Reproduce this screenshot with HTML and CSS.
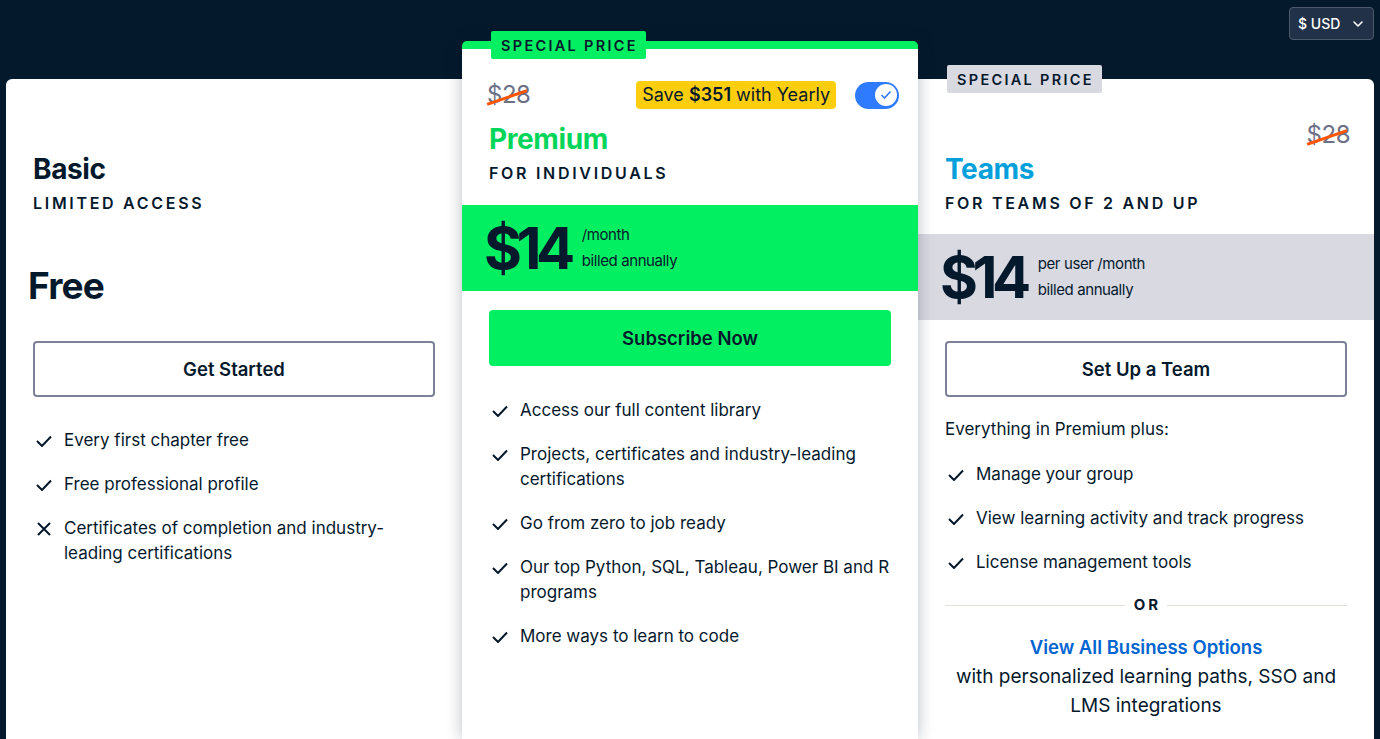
FILE: index.html
```html
<!DOCTYPE html>
<html lang="en">
<head>
    <meta charset="UTF-8">
    <meta name="viewport" content="width=device-width, initial-scale=1.0">
    <title>Plans and Pricing</title>
    <link rel="stylesheet" href="styles.css">
</head>
<body>
    <header class="topbar">
        <button class="currency" type="button">
            $ USD
            <svg class="chevron" width="10" height="6" viewBox="0 0 10 6"><path d="M1 1l4 4 4-4" fill="none" stroke="currentColor" stroke-width="1.6" stroke-linecap="round" stroke-linejoin="round"/></svg>
        </button>
    </header>

    <main class="plans">
        <!-- Basic -->
        <section class="plan plan-basic">
            <div class="plan-head">
                <div class="deal-row"></div>
                <h2 class="plan-name">Basic</h2>
                <p class="plan-sub">Limited Access</p>
            </div>
            <div class="price-band">
                <span class="price-free">Free</span>
            </div>
            <div class="plan-body">
                <a class="btn btn-outline" href="#">Get Started</a>
                <ul class="features">
                    <li>
                        <span class="icon"><svg width="16" height="12" viewBox="0 0 16 12"><path d="M1 6l5 5 9-9.5" fill="none" stroke="currentColor" stroke-width="2"/></svg></span>
                        Every first chapter free
                    </li>
                    <li>
                        <span class="icon"><svg width="16" height="12" viewBox="0 0 16 12"><path d="M1 6l5 5 9-9.5" fill="none" stroke="currentColor" stroke-width="2"/></svg></span>
                        Free professional profile
                    </li>
                    <li>
                        <span class="icon"><svg width="16" height="14" viewBox="0 0 16 14"><path d="M2 1l12 12M14 1L2 13" fill="none" stroke="currentColor" stroke-width="2"/></svg></span>
                        Certificates of completion and industry-leading certifications
                    </li>
                </ul>
            </div>
        </section>

        <!-- Premium -->
        <section class="plan plan-premium">
            <span class="tag tag-green">Special Price</span>
            <div class="plan-head">
                <div class="deal-row">
                    <span class="old-price">$28</span>
                    <div class="deal-extra">
                        <span class="save-badge">Save <b>$351</b> with Yearly</span>
                        <span class="toggle">
                            <span class="knob"><svg width="12" height="10" viewBox="0 0 12 10"><path d="M1.5 5l3 3 6-6.5" fill="none" stroke="currentColor" stroke-width="1.6"/></svg></span>
                        </span>
                    </div>
                </div>
                <h2 class="plan-name">Premium</h2>
                <p class="plan-sub">For Individuals</p>
            </div>
            <div class="price-band">
                <span class="price-amount">$14</span>
                <span class="price-note">/month<br>billed annually</span>
            </div>
            <div class="plan-body">
                <a class="btn btn-green" href="#">Subscribe Now</a>
                <ul class="features">
                    <li>
                        <span class="icon"><svg width="16" height="12" viewBox="0 0 16 12"><path d="M1 6l5 5 9-9.5" fill="none" stroke="currentColor" stroke-width="2"/></svg></span>
                        Access our full content library
                    </li>
                    <li>
                        <span class="icon"><svg width="16" height="12" viewBox="0 0 16 12"><path d="M1 6l5 5 9-9.5" fill="none" stroke="currentColor" stroke-width="2"/></svg></span>
                        Projects, certificates and industry-leading certifications
                    </li>
                    <li>
                        <span class="icon"><svg width="16" height="12" viewBox="0 0 16 12"><path d="M1 6l5 5 9-9.5" fill="none" stroke="currentColor" stroke-width="2"/></svg></span>
                        Go from zero to job ready
                    </li>
                    <li>
                        <span class="icon"><svg width="16" height="12" viewBox="0 0 16 12"><path d="M1 6l5 5 9-9.5" fill="none" stroke="currentColor" stroke-width="2"/></svg></span>
                        Our top Python, SQL, Tableau, Power BI and R programs
                    </li>
                    <li>
                        <span class="icon"><svg width="16" height="12" viewBox="0 0 16 12"><path d="M1 6l5 5 9-9.5" fill="none" stroke="currentColor" stroke-width="2"/></svg></span>
                        More ways to learn to code
                    </li>
                </ul>
            </div>
        </section>

        <!-- Teams -->
        <section class="plan plan-teams">
            <span class="tag tag-grey">Special Price</span>
            <div class="plan-head">
                <div class="deal-row">
                    <span class="old-price">$28</span>
                </div>
                <h2 class="plan-name">Teams</h2>
                <p class="plan-sub">For Teams of 2 and up</p>
            </div>
            <div class="price-band">
                <span class="price-amount">$14</span>
                <span class="price-note">per user /month<br>billed annually</span>
            </div>
            <div class="plan-body">
                <a class="btn btn-outline" href="#">Set Up a Team</a>
                <p class="plan-intro">Everything in Premium plus:</p>
                <ul class="features">
                    <li>
                        <span class="icon"><svg width="16" height="12" viewBox="0 0 16 12"><path d="M1 6l5 5 9-9.5" fill="none" stroke="currentColor" stroke-width="2"/></svg></span>
                        Manage your group
                    </li>
                    <li>
                        <span class="icon"><svg width="16" height="12" viewBox="0 0 16 12"><path d="M1 6l5 5 9-9.5" fill="none" stroke="currentColor" stroke-width="2"/></svg></span>
                        View learning activity and track progress
                    </li>
                    <li>
                        <span class="icon"><svg width="16" height="12" viewBox="0 0 16 12"><path d="M1 6l5 5 9-9.5" fill="none" stroke="currentColor" stroke-width="2"/></svg></span>
                        License management tools
                    </li>
                </ul>
                <div class="or-divider"><span>OR</span></div>
                <p class="business">
                    <a href="#">View All Business Options</a>
                    with personalized learning paths, SSO and LMS integrations
                </p>
            </div>
        </section>
    </main>
</body>
</html>
```

FILE: styles.css
```css
* {
    box-sizing: border-box;
}
body {
    margin: 0;
    font-family: Inter, "Noto Sans", sans-serif;
    background-color: #05192d; /* navy page */
    color: #05192d;
    overflow: hidden;
}
a {
    text-decoration: none;
    color: inherit;
}
p, h2, ul {
    margin: 0;
}

/* top bar */
.topbar {
    height: 41px;
    padding: 7px 6px 0;
    display: flex;
    justify-content: flex-end;
}
.currency {
    height: 33px;
    width: 85px;
    display: flex;
    align-items: center;
    gap: 13px;
    padding: 0 0 0 8px;
    background-color: #213147;
    border: 1px solid #4d5a6c;
    border-radius: 4px;
    color: #ffffff;
    font-family: inherit;
    font-size: 14px;
    font-weight: 500;
}

/* cards */
.plans {
    display: grid;
    grid-template-columns: repeat(3, 1fr);
    padding: 0 6px;
    height: calc(100vh - 41px);
}
.plan {
    position: relative;
    background-color: #ffffff;
}
.plan-basic {
    margin-top: 38px;
    border-radius: 6px 0 0 0;
}
.plan-teams {
    margin-top: 38px;
    border-radius: 0 6px 0 0;
}
.plan-premium {
    z-index: 1;
    border-top: 8px solid #03ef62;
    border-radius: 5px 5px 0 0;
    box-shadow: 0 0 16px rgba(5, 25, 45, 0.28);
}

.tag {
    position: absolute;
    left: 29px;
    height: 28px;
    padding: 0 8px 0 10px;
    display: flex;
    align-items: center;
    border-radius: 2px;
    font-size: 14.5px;
    font-weight: 600;
    letter-spacing: 2.3px;
    text-transform: uppercase;
}
.tag-green {
    top: -18px;
    background-color: #03ef62;
}
.tag-grey {
    top: -14px;
    background-color: #d9d9e2;
}

.plan-head {
    padding: 42px 27px 0;
}
.plan-premium .plan-head {
    padding-top: 32px;
}
.deal-row {
    height: 28px;
    display: flex;
    align-items: center;
}
.plan-premium .deal-row {
    margin: 0 -8px 0 -2px;
}
.plan-teams .deal-row {
    justify-content: flex-end;
    margin-right: -3px;
}
.old-price {
    position: relative;
    font-size: 24px;
    line-height: 28px;
    color: #6c7087;
    letter-spacing: -0.5px;
}
.old-price::after {
    content: "";
    position: absolute;
    left: -1px;
    top: 15px;
    width: 42px;
    height: 3px;
    background-color: #ff5400;
    transform: rotate(-19deg);
}
.deal-extra {
    margin-left: auto;
    display: flex;
    align-items: center;
    gap: 19px;
}
.save-badge {
    height: 28px;
    padding: 0 6px;
    background-color: #fcce0d;
    border-radius: 4px;
    font-size: 18px;
    line-height: 28px;
}
.save-badge b {
    font-weight: 600;
}
.toggle {
    width: 44px;
    height: 27px;
    padding: 0 2px;
    display: flex;
    align-items: center;
    justify-content: flex-end;
    background-color: #2f7bff;
    border-radius: 14px;
}
.knob {
    width: 22px;
    height: 22px;
    display: flex;
    align-items: center;
    justify-content: center;
    background-color: #ffffff;
    border-radius: 50%;
    color: #2f7bff;
}

.plan-name {
    margin-top: 2px;
    font-size: 28px;
    line-height: 36px;
    font-weight: 700;
    letter-spacing: -0.4px;
}
.plan-premium .plan-name {
    margin-top: 12px;
    color: #02d65a;
}
.plan-teams .plan-name {
    color: #03a0dc;
}
.plan-sub {
    margin-top: 6px;
    font-size: 16px;
    line-height: 20px;
    font-weight: 600;
    letter-spacing: 2.7px;
    text-transform: uppercase;
}

.price-band {
    height: 86px;
    margin-top: 21px;
    padding: 0 22px;
    display: flex;
    align-items: center;
    gap: 12px;
}
.plan-premium .price-band {
    margin-top: 22px;
    background-color: #03ef62;
}
.plan-teams .price-band {
    background-color: #d9d9e2;
}
.price-free {
    margin-top: 16px;
    font-size: 37px;
    font-weight: 700;
    letter-spacing: -0.8px;
}
.price-amount {
    font-size: 58px;
    line-height: 1;
    font-weight: 700;
    letter-spacing: -5.5px;
}
.price-note {
    font-size: 15px;
    line-height: 26px;
    letter-spacing: -0.4px;
}

.plan-body {
    padding: 21px 27px 0;
}
.plan-premium .plan-body {
    padding-top: 19px;
}
.btn {
    height: 56px;
    display: flex;
    align-items: center;
    justify-content: center;
    border-radius: 4px;
    font-size: 18.5px;
    font-weight: 600;
}
.btn-outline {
    border: 2px solid #7d8099;
}
.btn-green {
    background-color: #03ef62;
}

.features {
    margin-top: 31px;
    padding: 0;
    list-style: none;
    display: flex;
    flex-direction: column;
    gap: 19px;
}
.plan-premium .features {
    margin-top: 32px;
}
.features li {
    display: flex;
    font-size: 17px;
    line-height: 25px;
}
.icon {
    flex: none;
    width: 31px;
    height: 25px;
    padding-left: 3px;
    display: flex;
    align-items: center;
}
.plan-intro {
    margin-top: 20px;
    font-size: 17px;
    line-height: 25px;
}
.plan-teams .features {
    margin-top: 20px;
}

.or-divider {
    margin-top: 20px;
    display: flex;
    align-items: center;
    gap: 6px;
    font-size: 15px;
    line-height: 20px;
    font-weight: 700;
    letter-spacing: 3px;
}
.or-divider::before,
.or-divider::after {
    content: "";
    flex: 1;
    height: 1px;
    background-color: #e5e1da;
}
.or-divider span {
    padding-left: 3px;
}
.business {
    margin-top: 18px;
    text-align: center;
    font-size: 19px;
    line-height: 29px;
}
.business a {
    display: block;
    color: #0065d1;
    font-size: 18.5px;
    font-weight: 600;
}
```
